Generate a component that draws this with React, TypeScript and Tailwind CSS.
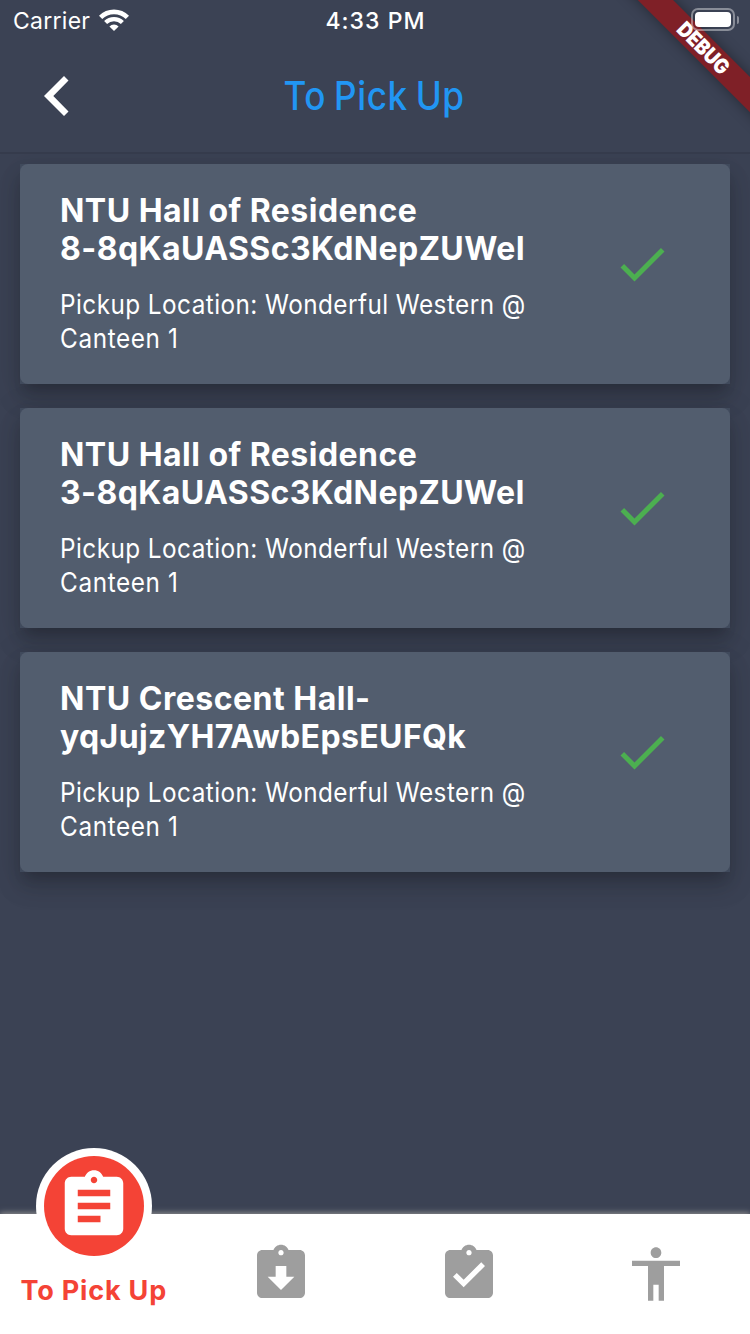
type Order = {
  first: string;
  second: string;
  firstClass: string;
  secondClass: string;
};

const orders: Order[] = [
  {
    first: 'NTU Hall of Residence',
    second: '8-8qKaUASSc3KdNepZUWeI',
    firstClass: 'tracking-[0.47px]',
    secondClass: 'tracking-[0.42px]',
  },
  {
    first: 'NTU Hall of Residence',
    second: '3-8qKaUASSc3KdNepZUWeI',
    firstClass: 'tracking-[0.47px]',
    secondClass: 'tracking-[0.42px]',
  },
  {
    first: 'NTU Crescent Hall-',
    second: 'yqJujzYH7AwbEpsEUFQk',
    firstClass: 'tracking-[0.5px]',
    secondClass: 'tracking-[0.38px]',
  },
];

function Icon({ d, className }: { d: string; className: string }) {
  return (
    <svg viewBox="0 0 24 24" className={className} fill="currentColor" aria-hidden="true">
      <path d={d} />
    </svg>
  );
}

const clipboard =
  'M19 3h-4.18C14.4 1.84 13.3 1 12 1c-1.3 0-2.4.84-2.82 2H5c-1.1 0-2 .9-2 2v14c0 1.1.9 2 2 2h14c1.1 0 2-.9 2-2V5c0-1.1-.9-2-2-2zm-7 0c.55 0 1 .45 1 1s-.45 1-1 1-1-.45-1-1 .45-1 1-1z';

const icons = {
  assignment: clipboard + 'm2 14H7v-2h7v2zm3-4H7v-2h10v2zm0-4H7V7h10v2z',
  returned: clipboard + 'm0 15l-5-5h3V9h4v4h3l-5 5z',
  turnedIn: clipboard + 'm-2 14l-4-4 1.41-1.41L10 14.17l6.59-6.59L18 9l-8 8z',
  accessibility:
    'M12 2c1.1 0 2 .9 2 2s-.9 2-2 2-2-.9-2-2 .9-2 2-2zm9 7h-6v13h-2v-6h-2v6H9V9H3V7h18v2z',
  check: 'M9 16.17L4.83 12l-1.42 1.41L9 19 21 7l-1.41-1.41z',
};

function StatusBar() {
  return (
    <div className="grid h-10 grid-cols-3 items-start">
      <div className="flex items-start pl-[13px]">
        <span className="pt-px text-[23px] leading-10 tracking-[0.27px]">Carrier</span>
        <svg
          viewBox="0 0 30 22"
          className="mt-[9px] ml-[9px] h-[22px] w-[30px]"
          fill="none"
          stroke="currentColor"
          strokeWidth="4.6"
          aria-hidden="true"
        >
          <path d="M1.6 8.4A18.9 18.9 0 0 1 28.4 8.4" />
          <path d="M6.6 13.6A11.9 11.9 0 0 1 23.4 13.6" strokeWidth="4.2" />
          <path d="M15 22L10.4 17.4A6.5 6.5 0 0 1 19.6 17.4Z" fill="currentColor" stroke="none" />
        </svg>
      </div>
      <div className="pt-px pl-px text-center text-[23px] leading-10 font-medium tracking-[1.05px]">4:33 PM</div>
      <div className="relative z-20 flex items-center justify-end pt-2 pr-[11px]">
        <div className="h-[23px] w-11 rounded-[7px] border-2 border-white/40 p-0.5">
          <div className="h-full w-full rounded-[4px] bg-white" />
        </div>
        <div className="ml-0.5 h-2 w-0.5 rounded-r-full bg-white/40" />
      </div>
    </div>
  );
}

function OrderCard({ order }: { order: Order }) {
  return (
    <article className="h-[220px] bg-[#404a5c] shadow-[0_10px_12px_-6px_rgba(0,0,0,0.16),0_16px_22px_2px_rgba(0,0,0,0.1),0_6px_28px_4px_rgba(0,0,0,0.1)]">
      <div className="flex h-full justify-between rounded-[8px] bg-[#525d6e] pt-7 pr-[58px] pl-10">
        <div className="whitespace-nowrap">
          <h2 className="text-[32px] leading-[38px] font-bold">
            <span className={`block ${order.firstClass}`}>{order.first}</span>
            <span className={`block ${order.secondClass}`}>{order.second}</span>
          </h2>
          <p className="mt-5 origin-left scale-x-90 text-[27px] leading-[34px]">
            <span className="block tracking-[0.5px]">Pickup Location: Wonderful Western @</span>
            <span className="block tracking-[0.7px]">Canteen 1</span>
          </p>
        </div>
        <Icon d={icons.check} className="mt-[42px] size-[60px] shrink-0 text-[#4caf50]" />
      </div>
    </article>
  );
}

export default function App() {
  return (
    <div className="relative flex h-[1334px] w-[750px] flex-col overflow-hidden bg-[#3b4254] font-['Inter','Liberation_Sans',sans-serif] text-white">
      <header className="h-[154px] border-b-2 border-[#353b4c]">
        <StatusBar />
        <div className="grid h-28 grid-cols-[120px_1fr_120px] items-center">
          <svg viewBox="0 0 25 40" className="ml-11 h-10 w-[25px]" fill="currentColor" aria-hidden="true">
            <path d="M20 0L24.5 4.5 9.3 20 24.5 35.5 20 40 0 20Z" />
          </svg>
          <h1 className="scale-x-90 pr-0.5 text-center text-[39px] leading-[48px] font-medium tracking-[0.75px] text-[#2196f3] [word-spacing:-2.5px]">
            To Pick Up
          </h1>
        </div>
      </header>

      <div className="absolute top-[35.5px] left-[553.5px] flex h-[24.5px] w-[300px] rotate-45 items-center justify-center bg-[#7f2027] shadow-[0_0_14px_rgba(0,0,0,0.38)]">
        <span className="scale-x-[0.88] text-[21px] leading-none font-black">DEBUG</span>
      </div>

      <main className="flex flex-1 flex-col gap-6 overflow-hidden px-5 pt-2.5">
        {orders.map((order) => (
          <OrderCard key={order.second} order={order} />
        ))}
      </main>

      <nav className="grid h-[120px] grid-cols-4 bg-white text-[#9e9e9e] shadow-[0_-1px_6px_rgba(190,185,175,0.7)]">
        <div className="flex flex-col items-center">
          <div className="-mt-[66px] flex size-[116px] shrink-0 items-center justify-center rounded-full bg-white">
            <div className="flex size-[100px] items-center justify-center rounded-full bg-[#f44336]">
              <Icon d={icons.assignment} className="size-[78px] text-white" />
            </div>
          </div>
          <span className="mt-2.5 text-[27px] leading-[34px] font-bold tracking-[0.8px] whitespace-nowrap text-[#f44336]">
            To Pick Up
          </span>
        </div>
        {[icons.returned, icons.turnedIn, icons.accessibility].map((d) => (
          <div key={d} className="flex items-center justify-center">
            <Icon d={d} className="size-16" />
          </div>
        ))}
      </nav>
    </div>
  );
}
